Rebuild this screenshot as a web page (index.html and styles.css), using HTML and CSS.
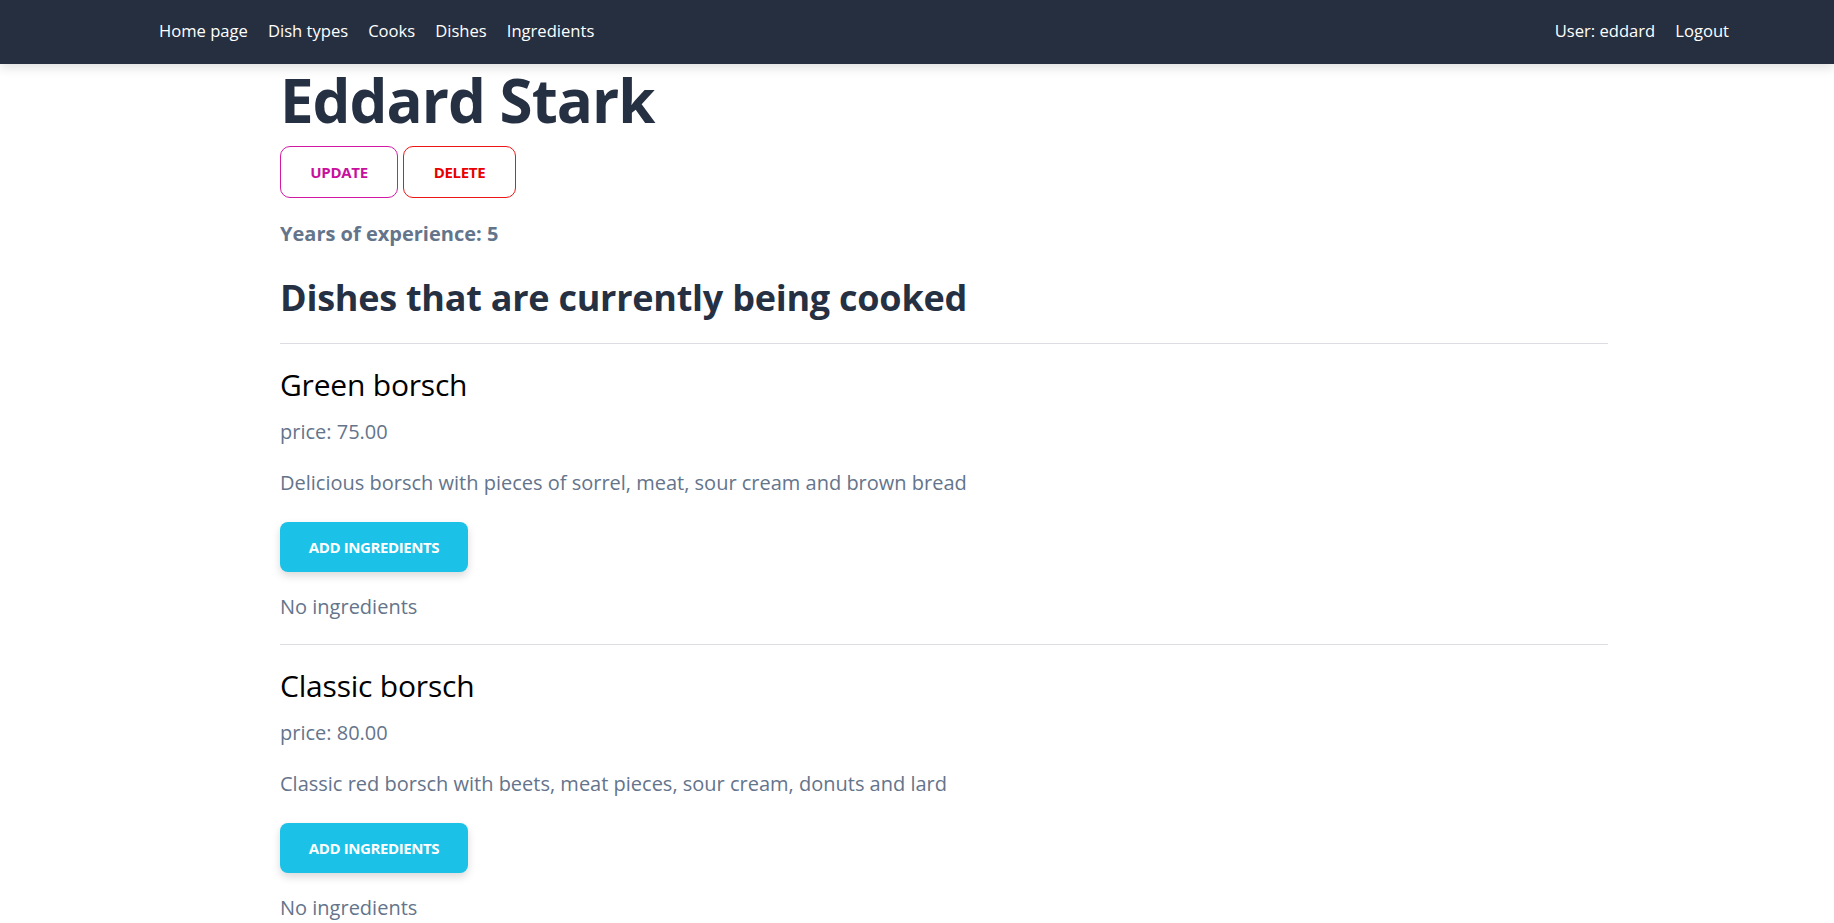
FILE: index.html
```html
<!DOCTYPE html>
<html lang="en">
<head>
<meta charset="utf-8">
<title>Eddard Stark</title>
<link rel="stylesheet" href="styles.css">
</head>
<body>
<nav class="topnav">
  <div class="nav-links">
    <a href="#">Home page</a>
    <a href="#">Dish types</a>
    <a href="#">Cooks</a>
    <a href="#">Dishes</a>
    <a href="#">Ingredients</a>
  </div>
  <div class="nav-links">
    <a href="#">User: eddard</a>
    <a href="#">Logout</a>
  </div>
</nav>
<main class="content">
  <h1 class="cook-name">Eddard Stark</h1>
  <div class="actions">
    <a href="#" class="btn-outline btn-update">Update</a>
    <a href="#" class="btn-outline btn-delete">Delete</a>
  </div>
  <p class="experience">Years of experience: 5</p>
  <h2 class="section-title">Dishes that are currently being cooked</h2>
  <section class="dish">
    <h3 class="dish-name">Green borsch</h3>
    <p class="dish-price">price: 75.00</p>
    <p class="dish-desc">Delicious borsch with pieces of sorrel, meat, sour cream and brown bread</p>
    <a href="#" class="btn-add">Add ingredients</a>
    <p class="dish-ingr">No ingredients</p>
  </section>
  <section class="dish">
    <h3 class="dish-name">Classic borsch</h3>
    <p class="dish-price">price: 80.00</p>
    <p class="dish-desc">Classic red borsch with beets, meat pieces, sour cream, donuts and lard</p>
    <a href="#" class="btn-add">Add ingredients</a>
    <p class="dish-ingr">No ingredients</p>
  </section>
</main>
</body>
</html>
```

FILE: styles.css
```css
* { box-sizing: border-box; }
html, body { margin: 0; padding: 0; background: #ffffff; }
body {
  font-family: "Open Sans", "Noto Sans", sans-serif;
  color: #64748b;
}
a { text-decoration: none; }

.topnav {
  height: 64px;
  background: #252f40;
  display: flex;
  align-items: center;
  justify-content: space-between;
  padding: 0 105px 2px 159px;
  box-shadow: 0 4px 10px rgba(0, 0, 0, 0.12);
  position: relative;
}
.nav-links { display: flex; gap: 20px; }
.nav-links a {
  color: #ffffff;
  font-size: 16.6px;
  line-height: 24px;
  letter-spacing: 0;
}

.content {
  display: flex;
  flex-direction: column;
  align-items: flex-start;
  margin: 0 226px 0 280px;
}

.cook-name {
  margin: 4px 0 0;
  font-size: 60px;
  line-height: 64px;
  font-weight: 700;
  color: #263043;
  letter-spacing: -1px;
}

.actions { display: flex; gap: 5px; margin-top: 14px; }
.btn-outline {
  height: 52px;
  display: flex;
  align-items: center;
  justify-content: center;
  border: 1px solid;
  border-radius: 10px;
  font-size: 15px;
  font-weight: 700;
  text-transform: uppercase;
  letter-spacing: -0.3px;
}
.btn-update { width: 118px; color: #c8109c; border-color: #d21aa4; }
.btn-delete { width: 113px; color: #e80000; border-color: #ee1515; }

.experience {
  margin: 22px 0 0;
  font-size: 20px;
  line-height: 28px;
  font-weight: 700;
  color: #64748b;
}

.section-title {
  margin: 30px 0 0;
  font-size: 36px;
  line-height: 40px;
  font-weight: 700;
  color: #263043;
  letter-spacing: -0.25px;
}

.dish {
  align-self: stretch;
  border-top: 1px solid #dcdde2;
  margin-top: 25px;
  display: flex;
  flex-direction: column;
  align-items: flex-start;
}
.dish + .dish { margin-top: 23px; }

.dish-name {
  margin: 23px 0 0;
  font-size: 30px;
  line-height: 36px;
  font-weight: 500;
  color: #000000;
  letter-spacing: -0.2px;
}
.dish-price,
.dish-desc,
.dish-ingr {
  font-size: 20px;
  line-height: 28px;
  color: #64748b;
  letter-spacing: 0;
}
.dish-price { margin: 15px 0 0; }
.dish-desc { margin: 23px 0 0; }
.dish-ingr { margin: 21px 0 0; }

.btn-add {
  margin-top: 25px;
  width: 188px;
  height: 50px;
  display: flex;
  align-items: center;
  justify-content: center;
  background: #1bc1e7;
  color: #ffffff;
  border-radius: 8px;
  font-size: 15px;
  font-weight: 700;
  text-transform: uppercase;
  letter-spacing: -0.4px;
  box-shadow: 0 4px 8px rgba(0, 0, 0, 0.15);
}
```
